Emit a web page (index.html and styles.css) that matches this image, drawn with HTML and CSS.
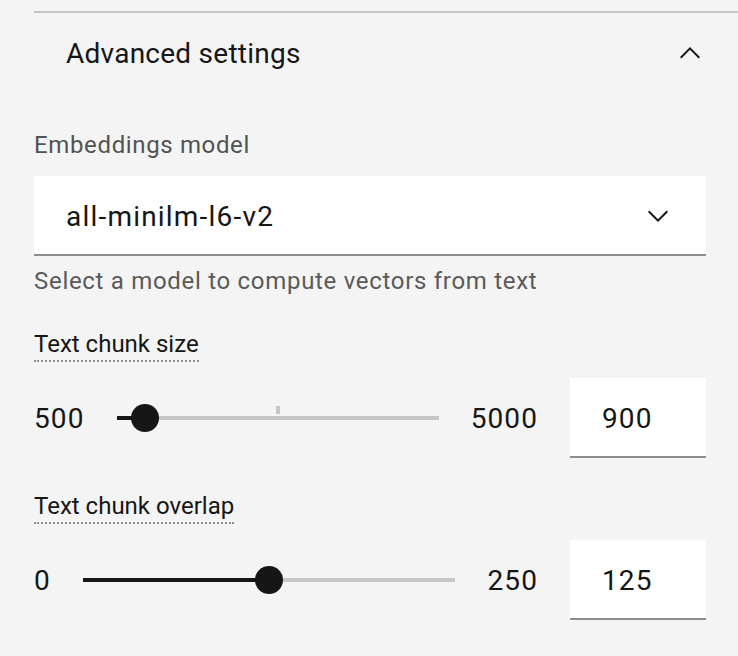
FILE: index.html
```html
<!DOCTYPE html>
<html lang="en">
<head>
<meta charset="utf-8">
<title>Advanced settings</title>
<link rel="stylesheet" href="styles.css">
</head>
<body>
<section class="accordion">
  <div class="acc-heading">
    <span class="acc-title">Advanced settings</span>
    <svg class="icon" viewBox="0 0 16 16" width="32" height="32" aria-hidden="true"><path d="M8 5L13 10 12.3 10.7 8 6.4 3.7 10.7 3 10z"/></svg>
  </div>
  <div class="acc-content">
    <div class="field">
      <div class="label">Embeddings model</div>
      <div class="dropdown">
        <span class="dropdown-value">all-minilm-l6-v2</span>
        <svg class="icon" viewBox="0 0 16 16" width="32" height="32" aria-hidden="true"><path d="M8 11L3 6 3.7 5.3 8 9.6 12.3 5.3 13 6z"/></svg>
      </div>
      <div class="helper">Select a model to compute vectors from text</div>
    </div>

    <div class="field field-slider">
      <div class="tip-wrap"><span class="tip-label">Text chunk size</span></div>
      <div class="slider-row">
        <span class="range-label">500</span>
        <div class="track">
          <div class="fill" style="width:8.89%"></div>
          <div class="tick"></div>
          <div class="thumb" style="left:8.89%"></div>
        </div>
        <span class="range-label">5000</span>
        <div class="num-input">900</div>
      </div>
    </div>

    <div class="field field-slider">
      <div class="tip-wrap"><span class="tip-label">Text chunk overlap</span></div>
      <div class="slider-row">
        <span class="range-label">0</span>
        <div class="track">
          <div class="fill" style="width:50%"></div>
          <div class="thumb" style="left:50%"></div>
        </div>
        <span class="range-label">250</span>
        <div class="num-input">125</div>
      </div>
    </div>
  </div>
</section>
</body>
</html>
```
FILE: styles.css
```css
html, body {
  margin: 0;
  padding: 0;
  background: #f4f4f4;
}

body {
  font-family: Roboto, "Liberation Sans", sans-serif;
  color: #161616;
  padding-top: 11px;
}

.accordion {
  margin-left: 34px;
  border-top: 2px solid #c6c6c6;
}

.acc-heading {
  height: 80px;
  display: flex;
  align-items: center;
  justify-content: space-between;
  padding: 0 32px;
}

.acc-title {
  font-size: 28px;
  line-height: 36px;
  letter-spacing: 0.25px;
  color: #161616;
  padding-top: 2px;
}

.icon {
  display: block;
  fill: #161616;
  flex: none;
}

.acc-content {
  padding: 35px 32px 0 0;
}

.label {
  font-size: 24px;
  line-height: 32px;
  letter-spacing: 0.64px;
  color: #525252;
  margin-bottom: 16px;
  padding-top: 1px;
  height: 31px;
}

.dropdown {
  box-sizing: border-box;
  height: 80px;
  background: #ffffff;
  border-bottom: 2px solid #8d8d8d;
  display: flex;
  align-items: center;
  justify-content: space-between;
  padding: 2px 32px 0 32px;
}

.dropdown-value {
  font-size: 28px;
  letter-spacing: 1.2px;
  color: #161616;
}

.helper {
  margin-top: 8px;
  font-size: 24px;
  line-height: 32px;
  letter-spacing: 0.7px;
  color: #5a5a5a;
  padding-top: 1px;
  height: 31px;
}

.field-slider {
  margin-top: 32px;
}

.tip-wrap {
  display: flex;
  margin-bottom: 16px;
}

.tip-label {
  display: block;
  font-size: 24px;
  line-height: 32px;
  height: 32px;
  box-sizing: content-box;
  color: #161616;
  border-bottom: 2px dotted #8d8d8d;
}

.slider-row {
  height: 80px;
  display: flex;
  align-items: center;
  gap: 32px;
}

.range-label {
  font-size: 28px;
  letter-spacing: 1.1px;
  color: #161616;
  flex: none;
}

.track {
  flex: 1;
  height: 4px;
  background: #c6c6c6;
  position: relative;
}

.fill {
  position: absolute;
  left: 0;
  top: 0;
  height: 100%;
  background: #161616;
}

.tick {
  position: absolute;
  left: 50%;
  top: -10px;
  width: 4px;
  height: 8px;
  margin-left: -2px;
  background: #c6c6c6;
}

.thumb {
  position: absolute;
  top: 50%;
  width: 28px;
  height: 28px;
  border-radius: 50%;
  background: #161616;
  transform: translate(-50%, -50%);
}

.num-input {
  box-sizing: border-box;
  width: 136px;
  height: 80px;
  flex: none;
  background: #ffffff;
  border-bottom: 2px solid #8d8d8d;
  display: flex;
  align-items: center;
  padding: 2px 0 0 32px;
  font-size: 28px;
  letter-spacing: 1.1px;
  color: #161616;
}
```
